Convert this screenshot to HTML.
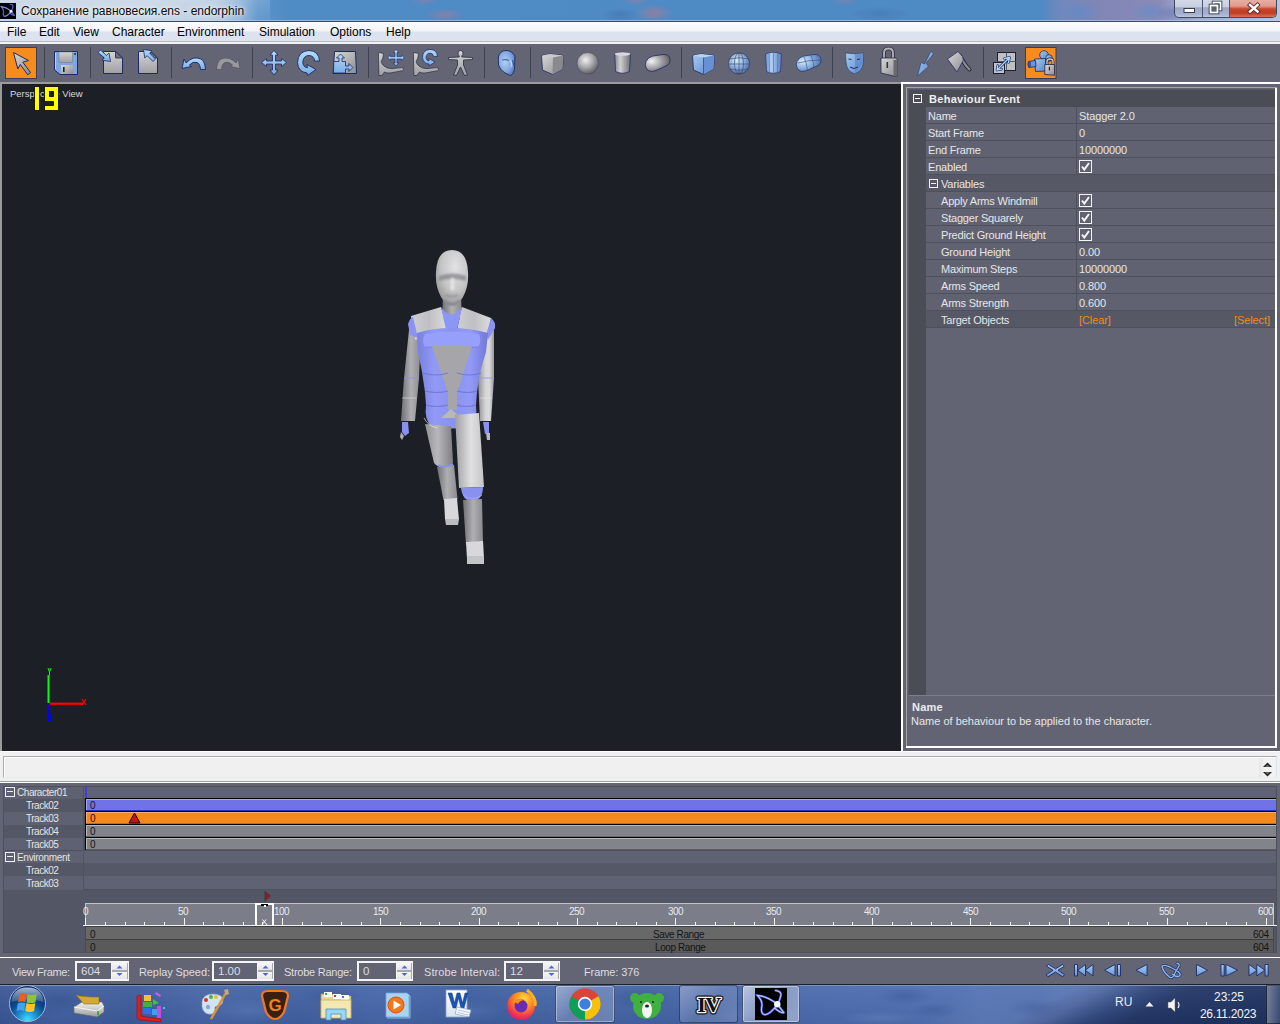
<!DOCTYPE html>
<html><head><meta charset="utf-8">
<style>
*{box-sizing:border-box;margin:0;padding:0}
html,body{width:1280px;height:1024px;overflow:hidden;background:#636575;font-family:"Liberation Sans",sans-serif;position:relative}
.a{position:absolute}
.t{position:absolute;white-space:pre;line-height:1}
svg{position:absolute;overflow:visible}
</style></head><body>
<!-- title -->
<div class="a" style="left:0px;top:0px;width:1280px;height:21px;background:linear-gradient(90deg,#c4d2e4 0px,#c6d4e6 150px,#b8cce2 215px,#90b2d8 240px,#5c94ca 258px,#4f8bc5 290px,#4e8ac4 1040px,#7088bc 1060px,#8086b6 1100px,#8a8ab8 1160px,#9aa6d0 1180px,#b4c4e2 1280px);"></div>
<div class="a" style="left:425px;top:8px;width:40px;height:14px;background:radial-gradient(closest-side,rgba(190,120,140,0.45),rgba(190,120,140,0));"></div>
<div class="a" style="left:635px;top:4px;width:38px;height:18px;background:radial-gradient(closest-side,rgba(200,120,130,0.5),rgba(200,120,130,0));"></div>
<div class="a" style="left:410px;top:-6px;width:30px;height:12px;background:radial-gradient(closest-side,rgba(200,120,140,0.35),rgba(200,120,140,0));"></div>
<div class="a" style="left:620px;top:-6px;width:30px;height:12px;background:radial-gradient(closest-side,rgba(200,120,140,0.35),rgba(200,120,140,0));"></div>
<div class="a" style="left:830px;top:-6px;width:30px;height:12px;background:radial-gradient(closest-side,rgba(200,120,140,0.3),rgba(200,120,140,0));"></div>
<div class="a" style="left:600px;top:8px;width:40px;height:14px;background:radial-gradient(closest-side,rgba(50,80,140,0.25),rgba(50,80,140,0));"></div>
<div class="a" style="left:850px;top:6px;width:60px;height:16px;background:radial-gradient(closest-side,rgba(50,80,140,0.2),rgba(50,80,140,0));"></div>
<div class="a" style="left:1155px;top:4px;width:50px;height:18px;background:radial-gradient(closest-side,rgba(50,80,150,0.35),rgba(50,80,150,0));"></div>
<div class="a" style="left:1060px;top:2px;width:40px;height:20px;background:radial-gradient(closest-side,rgba(80,140,210,0.45),rgba(80,140,210,0));"></div>
<div class="a" style="left:1130px;top:2px;width:40px;height:20px;background:radial-gradient(closest-side,rgba(80,140,210,0.45),rgba(80,140,210,0));"></div>
<div class="a" style="left:0px;top:20px;width:1280px;height:1px;background:rgba(190,210,240,0.6);"></div>
<div class="a" style="left:0px;top:0px;width:270px;height:21px;background:linear-gradient(180deg,rgba(255,255,255,0.15),rgba(255,255,255,0.05));"></div>
<div class="a" style="left:0px;top:21px;width:1280px;height:1px;background:#3d4b5e;"></div>
<svg style="left:0;top:3px" width="16" height="16" viewBox="0 0 32 32"><rect width="32" height="32" fill="#000"/>
<g fill="none" stroke="#5868c8" stroke-width="2.4" stroke-linecap="round"><path d="M22.5 16.3 Q12 8 2.4 7.4 Q7 12 7 17 Q5 27 10.5 26.7 Q16 25.5 22.5 16.3 M22.5 16.3 Q25 12 26 7 Q26 3 20.5 2.5 M22.5 16.3 Q26 21 28.8 24.5 Q27 26 19.5 20"/></g>
<g fill="none" stroke="#a0b0f0" stroke-width="1.2" stroke-linecap="round"><path d="M22.5 16.3 Q12 8 2.4 7.4 M22.5 16.3 Q16 25.5 10.5 26.7"/></g>
<circle cx="22" cy="16.3" r="3" fill="#e8eef8"/></svg><div class="t" style="left:21px;top:4.84px;font-size:12px;color:#0a0a0a;font-weight:400;text-shadow:0 0 6px rgba(255,255,255,0.9),0 0 3px rgba(255,255,255,0.8)">Сохранение равновесия.ens - endorphin</div>
<div class="a" style="left:1174px;top:-2px;width:103px;height:20px;border:1px solid #3c4a60;border-top:none;border-radius:0 0 5px 5px;overflow:hidden;background:linear-gradient(#d6dce8 0,#c8d0e0 45%,#9ea8c6 52%,#a8b2d0 85%,#bcc6e0 100%)">
<div class="a" style="left:27px;top:0;width:1px;height:20px;background:#4b5670"></div>
<div class="a" style="left:54px;top:0;width:1px;height:20px;background:#4b5670"></div>
<div class="a" style="left:55px;top:0;width:47px;height:20px;background:linear-gradient(#eab4aa 0,#e09c8c 40%,#c8442a 55%,#c23c22 75%,#d8806c 100%)"></div>
</div><svg style="left:1174px;top:0" width="103" height="18" viewBox="1174 0 103 18">
<rect x="1184" y="8.5" width="10.5" height="4" fill="#fff" stroke="#363e52" stroke-width="1"/>
<rect x="1213.5" y="2.5" width="7" height="7" fill="none" stroke="#363e52" stroke-width="3.6"/>
<rect x="1213.5" y="2.5" width="7" height="7" fill="none" stroke="#fff" stroke-width="1.8"/>
<rect x="1210.5" y="5.5" width="7" height="7" fill="#8890a8" stroke="#363e52" stroke-width="3.6"/>
<rect x="1210.5" y="5.5" width="7" height="7" fill="#5a6278" stroke="#fff" stroke-width="1.8"/>
<path d="M1250 5 L1257.5 11.5 M1257.5 5 L1250 11.5" stroke="#4a3030" stroke-width="4.2" stroke-linecap="square"/>
<path d="M1250 5 L1257.5 11.5 M1257.5 5 L1250 11.5" stroke="#fff" stroke-width="2.4" stroke-linecap="square"/>
</svg><!-- menu -->
<div class="a" style="left:0px;top:22px;width:1280px;height:19px;background:linear-gradient(#fcfcfe 0,#f3f4f9 45%,#dde2ef 55%,#dde2ef 100%);"></div>
<div class="a" style="left:0px;top:41px;width:1280px;height:1px;background:#b8bac2;"></div>
<div class="a" style="left:0px;top:42px;width:1280px;height:2px;background:#f2f2f2;"></div>
<div class="t" style="left:7px;top:25.84px;font-size:12px;color:#000;font-weight:400;">File</div>
<div class="t" style="left:39px;top:25.84px;font-size:12px;color:#000;font-weight:400;">Edit</div>
<div class="t" style="left:73px;top:25.84px;font-size:12px;color:#000;font-weight:400;">View</div>
<div class="t" style="left:112px;top:25.84px;font-size:12px;color:#000;font-weight:400;">Character</div>
<div class="t" style="left:177px;top:25.84px;font-size:12px;color:#000;font-weight:400;">Environment</div>
<div class="t" style="left:259px;top:25.84px;font-size:12px;color:#000;font-weight:400;">Simulation</div>
<div class="t" style="left:330px;top:25.84px;font-size:12px;color:#000;font-weight:400;">Options</div>
<div class="t" style="left:386px;top:25.84px;font-size:12px;color:#000;font-weight:400;">Help</div>
<!-- toolbar -->
<div class="a" style="left:0px;top:44px;width:1280px;height:38px;background:#636575;"></div>
<svg style="left:0;top:44px" width="1280" height="38" viewBox="0 44 1280 38">
<defs>
<linearGradient id="gb" x1="0" y1="0" x2="0" y2="1"><stop offset="0" stop-color="#b4dcf8"/><stop offset="1" stop-color="#78ace4"/></linearGradient>
<linearGradient id="gbd" x1="0" y1="0" x2="1" y2="1"><stop offset="0" stop-color="#a8ccf0"/><stop offset="1" stop-color="#5a86cc"/></linearGradient>
<linearGradient id="gg" x1="0" y1="0" x2="1" y2="1"><stop offset="0" stop-color="#d8d8da"/><stop offset="1" stop-color="#8e8e92"/></linearGradient>
<linearGradient id="ggv" x1="0" y1="0" x2="0" y2="1"><stop offset="0" stop-color="#d4d4d6"/><stop offset="1" stop-color="#a0a0a4"/></linearGradient>
<linearGradient id="ggh" x1="0" y1="0" x2="1" y2="0"><stop offset="0" stop-color="#8a8a8e"/><stop offset="0.35" stop-color="#d0d0d2"/><stop offset="1" stop-color="#6e6e72"/></linearGradient>
<linearGradient id="gbh" x1="0" y1="0" x2="1" y2="0"><stop offset="0" stop-color="#6a90d0"/><stop offset="0.35" stop-color="#b0d0f4"/><stop offset="1" stop-color="#5a7ec0"/></linearGradient>
<radialGradient id="gsph" cx="0.4" cy="0.35" r="0.7"><stop offset="0" stop-color="#f0f0f2"/><stop offset="0.5" stop-color="#a8a8ac"/><stop offset="1" stop-color="#56565a"/></radialGradient>
<radialGradient id="gbsph" cx="0.4" cy="0.35" r="0.7"><stop offset="0" stop-color="#d8ecfa"/><stop offset="0.5" stop-color="#88b0e0"/><stop offset="1" stop-color="#4a6aa8"/></radialGradient>
<radialGradient id="gcap" cx="0.25" cy="0.4" r="0.8"><stop offset="0" stop-color="#f4f4f6"/><stop offset="0.5" stop-color="#a4a4a8"/><stop offset="1" stop-color="#5a5a5e"/></radialGradient>
<radialGradient id="gbcap" cx="0.25" cy="0.4" r="0.8"><stop offset="0" stop-color="#d8ecfa"/><stop offset="0.5" stop-color="#8ab0e0"/><stop offset="1" stop-color="#4a6aa8"/></radialGradient>
<radialGradient id="ghead" cx="0.4" cy="0.45" r="0.7"><stop offset="0" stop-color="#b4d2f2"/><stop offset="0.6" stop-color="#80a4e0"/><stop offset="1" stop-color="#4e6cb4"/></radialGradient>
</defs>
<g fill="#3e4152">
<rect x="44" y="47" width="1" height="31"/><rect x="90" y="47" width="1" height="31"/><rect x="171" y="47" width="1" height="31"/>
<rect x="252" y="47" width="1" height="31"/><rect x="368" y="47" width="1" height="31"/><rect x="484" y="47" width="1" height="31"/>
<rect x="530" y="47" width="1" height="31"/><rect x="681" y="47" width="1" height="31"/><rect x="832" y="47" width="1" height="31"/>
<rect x="983" y="47" width="1" height="31"/>
</g>
<!-- select button -->
<rect x="5.5" y="47.5" width="31" height="31" fill="#f78b1c" stroke="#3a3e56" stroke-width="1"/>
<path d="M13.5 52.5 L28.5 60.5 L22.8 62.2 L30.5 72.5 L27.8 74.8 L20.3 64.5 L17.8 69 Z" fill="url(#gg)" stroke="#202a5a" stroke-width="1" stroke-linejoin="round"/>
<!-- floppy -->
<path d="M54.5 51.5 L77.5 51.5 L77.5 74.5 L60 74.5 L54.5 70 Z" fill="#7ea6e2" stroke="#1c2868" stroke-width="1"/>
<rect x="59" y="52" width="13.5" height="10.5" fill="url(#ggv)" stroke="#6e7890" stroke-width="0.5"/>
<rect x="61" y="65" width="12" height="9" fill="url(#gg)"/>
<rect x="63" y="67" width="1.6" height="5" fill="#222"/>
<circle cx="75" cy="54" r="0.9" fill="#222"/>
<path d="M55.5 53 L55.5 69" stroke="#b8d4f4" stroke-width="1"/>
<!-- import doc -->
<path d="M103.5 51.5 L115.5 51.5 L122.5 58 L122.5 73.5 L103.5 73.5 Z" fill="url(#ggv)" stroke="#1c2868" stroke-width="1"/>
<path d="M115.5 51.5 L115.5 58 L122.5 58 Z" fill="#707074" stroke="#1c2868" stroke-width="0.8"/>
<path d="M98 52.5 L100.5 50 L106.5 55.5 L109 53 L110.5 61.5 L102 60.2 L104.3 57.8 Z" fill="url(#gb)" stroke="#1c2868" stroke-width="0.8" stroke-linejoin="round"/>
<!-- export doc -->
<path d="M138.5 51.5 L150.5 51.5 L157.5 58 L157.5 73.5 L138.5 73.5 Z" fill="url(#ggv)" stroke="#1c2868" stroke-width="1"/>
<path d="M150.5 51.5 L150.5 58 L157.5 58 Z" fill="#707074" stroke="#1c2868" stroke-width="0.8"/>
<path d="M143.5 49.5 L152 50.8 L149.7 53.2 L155.5 59 L153 61.5 L147.2 55.7 L144.8 58 Z" fill="url(#gb)" stroke="#1c2868" stroke-width="0.8" stroke-linejoin="round"/>
<!-- undo -->
<path d="M186 63 Q193 55.5 201 59 Q205 61.5 205.5 69.5 L200.5 69.5 Q200 63.5 197 62.5 Q193 61 189.5 65 L191.5 66.5 L182 68.5 L184 59 Z" fill="url(#gb)" stroke="#1c2868" stroke-width="0.9" stroke-linejoin="round"/>
<!-- redo (gray) -->
<path d="M236 63 Q229 55.5 221 59 Q217 61.5 216.5 69.5 L221.5 69.5 Q222 63.5 225 62.5 Q229 61 232.5 65 L230.5 66.5 L240 68.5 L238 59 Z" fill="#9a9a9e" stroke="#505260" stroke-width="0.7" stroke-linejoin="round"/>
<!-- move -->
<path d="M274 50.5 L278 55 L275.5 55 L275.5 61 L281.5 61 L281.5 58.5 L286.5 62.5 L281.5 66.5 L281.5 64 L275.5 64 L275.5 70 L278 70 L274 75 L270 70 L272.5 70 L272.5 64 L266.5 64 L266.5 66.5 L261.5 62.5 L266.5 58.5 L266.5 61 L272.5 61 L272.5 55 L270 55 Z" fill="url(#gb)" stroke="#1c2868" stroke-width="0.8" stroke-linejoin="round"/>
<!-- rotate -->
<path d="M319.5 61 Q319 51 309 50.5 Q298 51 297.5 62.5 Q298 72 307 73 L307.5 75.5 L316 69.5 L307 64.5 L307.3 67.8 Q303 67 302.8 62 Q303.5 55.5 309 55.5 Q314.5 56 314.5 61 Z" fill="url(#gb)" stroke="#1c2868" stroke-width="0.9" stroke-linejoin="round"/>
<!-- scale -->
<path d="M334.5 51.5 L355.5 51.5 L356.5 73.5 L333 73.5 Z" fill="url(#gg)" stroke="#1c2868" stroke-width="1"/>
<path d="M333.8 61.5 L339 61.5 L339 58 L336.5 58 L340.5 54 L344.5 58 L342 58 L342 61.5 L345.5 61.5 L345.5 66 L349 66 L349 63.5 L353 67.5 L349 71.5 L349 69 L345.5 69 L345.5 73 L333.5 73 Z" fill="url(#gb)" stroke="#1c2868" stroke-width="0.8" stroke-linejoin="round"/>
<!-- char move -->
<path d="M378.5 52.5 L383.5 53.5 L382.8 58 L381.2 61.5 Q381.5 64 384 66 Q387.5 68.8 392 68.6 L401.5 67.6 Q403.8 67.8 403.6 69.8 Q403.2 71 400 71.2 L390 73 Q386.5 73.4 384.5 72 L381.8 75.5 L378.8 75.5 Z" fill="url(#ggv)" stroke="#2a2c40" stroke-width="0.7" stroke-linejoin="round"/>
<path d="M396 49.5 L398.8 52.5 L397 52.5 L397 56.5 L401.5 56.5 L401.5 55 L404.5 57.8 L401.5 60.5 L401.5 59 L397 59 L397 63 L398.8 63 L396 66 L393.2 63 L395 63 L395 59 L390.5 59 L390.5 60.5 L387.5 57.8 L390.5 55 L390.5 56.5 L395 56.5 L395 52.5 L393.2 52.5 Z" fill="url(#gb)" stroke="#1c2868" stroke-width="0.6" stroke-linejoin="round"/>
<!-- char rotate -->
<path d="M413.5 52.5 L418.5 53.5 L417.8 58 L416.2 61.5 Q416.5 64 419 66 Q422.5 68.8 427 68.6 L436.5 67.6 Q438.8 67.8 438.6 69.8 Q438.2 71 435 71.2 L425 73 Q421.5 73.4 419.5 72 L416.8 75.5 L413.8 75.5 Z" fill="url(#ggv)" stroke="#2a2c40" stroke-width="0.7" stroke-linejoin="round"/>
<path d="M437.5 56.5 Q437 49.5 430 49.5 Q422.5 50 422.5 57.5 Q423 63.5 429 64 L429 66 L435 62 L429 58.5 L429 61 Q426 60.5 426 57.5 Q426.5 53 430 53 Q433.5 53.5 433.5 56.5 Z" fill="url(#gb)" stroke="#1c2868" stroke-width="0.7" stroke-linejoin="round"/>
<!-- figure -->
<path d="M460.5 50.5 Q463 50.5 463 53 Q463 55 461.8 55.8 L461.8 57 L472.5 57.5 L472.5 59.5 L463.5 60 L463.5 65 L467.5 75 L464.5 75.5 L460.5 67 L456.5 75.5 L453.5 75 L457.5 65 L457.5 60 L448.5 59.5 L448.5 57.5 L459.2 57 L459.2 55.8 Q458 55 458 53 Q458 50.5 460.5 50.5 Z" fill="url(#ggv)" stroke="#2a2c40" stroke-width="0.8" stroke-linejoin="round"/>
<!-- head -->
<path d="M506 50.5 Q500 50.5 498.3 57 L498.5 65 Q500 70 505 73 L510.5 75.5 Q514 74 514.5 68 L515 56 Q512 50.5 506 50.5 Z" fill="url(#ghead)" stroke="#1c2a60" stroke-width="0.9"/>
<path d="M502 60 Q506 59 509 60.5" stroke="#4a68b0" stroke-width="1.2" fill="none"/>
<path d="M510.5 60 L512 65.5 L510.5 66.5" stroke="#c8e4fa" stroke-width="1" fill="none"/>
<path d="M512.5 60 L514 66" stroke="#3a58a0" stroke-width="1.2" fill="none"/>
<!-- gray cube -->
<path d="M541.5 55.5 L550 54 L563.5 55.5 L562.5 69 L552.5 74.5 L542.5 70 Z" fill="url(#gg)" stroke="#1c2868" stroke-width="0.8"/>
<path d="M541.5 55.5 L553 57.5 L563.5 55.5 L550 54 Z" fill="#cacace"/>
<path d="M553 57.5 L552.5 74.5 L562.5 69 L563.5 55.5 Z" fill="#8a8a8e"/>
<!-- sphere -->
<circle cx="587.8" cy="63.3" r="10.8" fill="url(#gsph)" stroke="#4a4a55" stroke-width="0.6"/>
<!-- cylinder -->
<path d="M614.8 54 Q622.5 50.5 630.5 54 L629.5 71.5 Q622.5 75 615.5 71.5 Z" fill="url(#ggh)" stroke="#1c2868" stroke-width="0.7"/>
<ellipse cx="622.6" cy="54" rx="7.8" ry="1.8" fill="#d8d8da"/>
<!-- capsule -->
<path d="M649 71 Q644 68 646 61.5 Q648 57 653 56 L663 54.5 Q669 54 670 59 Q670.5 64 666 66 L656 70.5 Q652 72 649 71 Z" fill="url(#gcap)" stroke="#1c2868" stroke-width="0.8"/>
<!-- blue cube -->
<path d="M692.5 55.5 L701 54 L714.5 55.5 L713.5 69 L703.5 74.5 L693.5 70 Z" fill="url(#gbd)" stroke="#1c2868" stroke-width="0.8"/>
<path d="M692.5 55.5 L703.5 57.5 L714.5 55.5 L701 54 Z" fill="#b8d4f2"/>
<path d="M703.5 57.5 L703.5 74.5 L713.5 69 L714.5 55.5 Z" fill="#6a90d4"/>
<path d="M703.5 57.5 L703.5 74.5" stroke="#3a4a7a" stroke-width="0.8"/>
<!-- globe -->
<circle cx="739" cy="63.5" r="10.6" fill="url(#gbsph)" stroke="#3a3a48" stroke-width="0.7"/>
<g stroke="#3a4060" stroke-width="0.6" fill="none"><ellipse cx="739" cy="63.5" rx="4.5" ry="10.6"/><path d="M739 53 L739 74 M729 59 Q739 56.5 749 59 M728.5 64 L749.5 64 M729.5 69 Q739 71.5 748.5 69"/></g>
<!-- blue cylinder -->
<path d="M765.5 54 Q773 50.5 781.5 54 L780.5 71.5 Q773 75 766.5 71.5 Z" fill="url(#gbh)" stroke="#2a3a70" stroke-width="0.7"/>
<g stroke="#4a6aa8" stroke-width="0.6"><path d="M769 53 L769.5 72.5 M773.5 52.5 L773.5 73.5 M778 53 L777.5 72.5"/></g>
<!-- blue capsule -->
<path d="M800 71 Q795 68 797 61.5 Q799 57 804 56 L814 54.5 Q820 54 821 59 Q821.5 64 817 66 L807 70.5 Q803 72 800 71 Z" fill="url(#gbcap)" stroke="#2a3a70" stroke-width="0.8"/>
<g stroke="#3a4a78" stroke-width="0.6" fill="none"><path d="M804 56.5 Q806.5 63 807.5 70 M811 55.3 Q813.5 61 814 68 M798 63 Q808 60 820 60"/></g>
<!-- mask -->
<path d="M845.5 53 Q855 54.5 863.5 53 L863.5 62 Q863 71 854.5 74 Q846.5 71 846 62 Z" fill="url(#gbd)" stroke="#2a3a70" stroke-width="0.6"/>
<path d="M855 54 L855 74 L863 62 L863.5 53Z" fill="#5a80c4" opacity="0.6"/>
<path d="M848.5 59 L851.5 59.5 M857 59.5 L860 59 M850 67 Q854 70 858 67" stroke="#203060" stroke-width="1" fill="none"/>
<!-- lock -->
<path d="M884 58 L884 53 Q884 48.5 888.5 48.5 Q893 48.5 893 53 L893 58" stroke="#2a2c40" stroke-width="3.4" fill="none"/>
<path d="M884 58 L884 53 Q884 48.5 888.5 48.5 Q893 48.5 893 53 L893 58" stroke="#b4b4b8" stroke-width="1.8" fill="none"/>
<path d="M881 58 L896 58 L897.5 60 L897.5 76 L893.5 76 L881 73 Z" fill="url(#gg)" stroke="#2a2c40" stroke-width="0.8"/>
<path d="M893.5 60 L897.5 60 L897.5 76 L893.5 76Z" fill="#6a6a6e"/>
<rect x="886.5" y="62" width="1.6" height="6" fill="#333"/>
<!-- pen -->
<path d="M932.5 52 Q934 53.5 932 56 L926 63 L928.5 66.5 L917.5 76 L921 62.5 L924.5 64 L930 53 Q931 51 932.5 52 Z" fill="url(#gbd)" stroke="#2a3a70" stroke-width="0.6" stroke-linejoin="round"/>
<!-- axe -->
<path d="M960 56 L965.5 65 L969.5 69.5" stroke="#1c2240" stroke-width="4" stroke-linecap="round" fill="none"/>
<path d="M960 56 L965.5 65 L969.5 69.5" stroke="#8c8c90" stroke-width="2.3" stroke-linecap="round" fill="none"/>
<path d="M947.5 59 L958 51.5 L962.5 56.5 L963.5 60 L957 72 Z" fill="url(#gg)" stroke="#2a2c6a" stroke-width="0.8" stroke-linejoin="round"/>
<!-- resize grid -->
<rect x="997.5" y="52.5" width="18" height="18" fill="#c0c0c2" stroke="#1a1e38" stroke-width="1"/>
<path d="M1006.5 52.5 L1006.5 70.5 M997.5 61.5 L1015.5 61.5" stroke="#5a5c68" stroke-width="1"/>
<rect x="993.5" y="62.5" width="11" height="11" fill="#c4c4c6" stroke="#1a1e38" stroke-width="1"/>
<path d="M997 70 L1009.5 57.5 M1009.5 57.5 L1004.5 58.5 M1009.5 57.5 L1008.5 62.5 M997 70 L997.8 65.5 M997 70 L1001.5 69.2" stroke="#1c2868" stroke-width="2.6" stroke-linecap="round"/>
<path d="M997 70 L1009.5 57.5 M1009.5 57.5 L1004.5 58.5 M1009.5 57.5 L1008.5 62.5 M997 70 L997.8 65.5 M997 70 L1001.5 69.2" stroke="#a8d8f8" stroke-width="1.3" stroke-linecap="round"/>
<!-- camera lock button -->
<rect x="1025.5" y="47.5" width="30.5" height="31" fill="#f78b1c" stroke="#3a3e56" stroke-width="1"/>
<circle cx="1044" cy="55" r="4.3" fill="url(#gbd)" stroke="#1c2868" stroke-width="0.8"/>
<circle cx="1049" cy="58" r="3.3" fill="url(#gbd)" stroke="#1c2868" stroke-width="0.8"/>
<path d="M1034.5 59 L1045.5 58.5 L1046 71 L1035.5 71.5 Z" fill="url(#gbd)" stroke="#1c2868" stroke-width="0.8"/>
<path d="M1028.5 61.5 L1035.5 60.5 L1036 66.5 L1029 67.5 Q1027.5 64.5 1028.5 61.5 Z" fill="#6a98e0" stroke="#1c2868" stroke-width="0.8"/>
<ellipse cx="1029.3" cy="64.5" rx="1.2" ry="3" fill="#3a60b0" stroke="#1c2868" stroke-width="0.6"/>
<path d="M1047 65 L1047 61.5 Q1047 59 1050 59 Q1053 59 1053 61.5 L1053 65" stroke="#1c2240" stroke-width="2.8" fill="none"/>
<path d="M1047 65 L1047 61.5 Q1047 59 1050 59 Q1053 59 1053 61.5 L1053 65" stroke="#c8c8ca" stroke-width="1.4" fill="none"/>
<path d="M1044.8 64.5 L1054.5 64.5 L1054.5 75.2 L1044.8 74.5 Z" fill="url(#gg)" stroke="#1c2240" stroke-width="0.8"/>
<rect x="1048.8" y="66.8" width="1.2" height="3.6" fill="#222"/>
</svg>
<!-- viewport -->
<div class="a" style="left:0px;top:82px;width:901px;height:2px;background:#9b9b99;"></div>
<div class="a" style="left:0px;top:82px;width:2px;height:669px;background:#9b9b99;"></div>
<div class="a" style="left:2px;top:84px;width:899px;height:667px;background:#1d1f27;"></div>
<div class="t" style="left:10px;top:88.96px;font-size:9.5px;color:#d8d8d8;font-weight:400;">Perspective View</div>
<svg style="left:34px;top:86px" width="26" height="26" viewBox="0 0 26 26"><g fill="#ffff00" stroke="#000" stroke-width="0.8"><rect x="0.5" y="0.5" width="5" height="24"/><path d="M10.5 0.5 L24.5 0.5 L24.5 24.5 L10.5 24.5 L10.5 19.5 L19.5 19.5 L19.5 15.5 L10.5 15.5 Z"/></g><rect x="15.5" y="5.5" width="4" height="5" fill="#1d1f27" stroke="#000" stroke-width="0.8"/></svg>
<svg style="left:40px;top:665px" width="60" height="60" viewBox="40 665 60 60">
<rect x="47.5" y="675" width="2" height="28" fill="#00ff00"/>
<path d="M48 668 L49.5 672 L51 668 M49.5 672 L49.5 675" stroke="#00ff00" stroke-width="1" fill="none"/>
<rect x="49.5" y="702.6" width="34" height="2.2" fill="#ff0000"/>
<path d="M82 699 L86 705 M86 699 L82 705" stroke="#ff0000" stroke-width="1.2"/>
<rect x="47.5" y="703" width="2" height="18" fill="#0000ff"/>
<path d="M49 714 L51.5 714 L49.5 719 L52 719" stroke="#0000ff" stroke-width="1" fill="none"/>
<rect x="47.5" y="719" width="4" height="2" fill="#0000ff"/>
</svg><svg style="left:380px;top:240px" width="140" height="340" viewBox="380 240 140 340">
<defs>
<linearGradient id="fgh" x1="0" y1="0" x2="1" y2="0"><stop offset="0" stop-color="#8e8e92"/><stop offset="0.45" stop-color="#d4d4d6"/><stop offset="0.7" stop-color="#dcdcde"/><stop offset="1" stop-color="#9a9a9e"/></linearGradient>
<linearGradient id="fgl" x1="0" y1="0" x2="1" y2="0"><stop offset="0" stop-color="#707074"/><stop offset="0.5" stop-color="#b0b0b4"/><stop offset="1" stop-color="#8a8a8e"/></linearGradient>
<linearGradient id="fgl2" x1="0" y1="0" x2="1" y2="0"><stop offset="0" stop-color="#909094"/><stop offset="0.45" stop-color="#b8b8bc"/><stop offset="1" stop-color="#7e7e82"/></linearGradient><linearGradient id="fgr" x1="0" y1="0" x2="1" y2="0"><stop offset="0" stop-color="#a0a0a4"/><stop offset="0.55" stop-color="#e0e0e2"/><stop offset="1" stop-color="#c4c4c6"/></linearGradient>
<radialGradient id="fhead" cx="0.6" cy="0.3" r="0.8"><stop offset="0" stop-color="#e2e2e4"/><stop offset="0.55" stop-color="#c4c4c6"/><stop offset="1" stop-color="#8a8a8e"/></radialGradient>
<linearGradient id="fsh" x1="0" y1="0" x2="1" y2="0"><stop offset="0" stop-color="#cfcfd2"/><stop offset="0.5" stop-color="#c0c0c4"/><stop offset="1" stop-color="#dcdcde"/></linearGradient>
<filter id="fblur" x="-20%" y="-20%" width="140%" height="140%"><feGaussianBlur stdDeviation="0.8"/></filter><linearGradient id="fbl" x1="0" y1="0" x2="0" y2="1"><stop offset="0" stop-color="#9aa2f8"/><stop offset="1" stop-color="#7880e0"/></linearGradient><linearGradient id="fbh" x1="0" y1="0" x2="1" y2="0"><stop offset="0" stop-color="#7880e0"/><stop offset="0.25" stop-color="#929af6"/><stop offset="0.5" stop-color="#8a92f0"/><stop offset="0.75" stop-color="#929af6"/><stop offset="1" stop-color="#7078d8"/></linearGradient>
</defs>
<!-- arms -->
<path d="M409 330 L421 330 L419 378 L415 421 L401 421 L404 378 Z" fill="url(#fgl)"/>
<path d="M404 378 L419 378" stroke="#8a94f0" stroke-width="0.8"/>
<path d="M402 398 L416 398" stroke="#e0e0e0" stroke-width="0.6"/>
<path d="M402 422 L408 422 L409 433 L405 436 L402 432 Z" fill="#8890f0"/>
<path d="M401 432 L404 436 L402 440 L400 437Z" fill="#b0b0b4"/>
<path d="M478 330 L494 330 L494 378 L491 421 L480 421 L478 378 Z" fill="url(#fgh)"/>
<path d="M479 378 L493 378" stroke="#8a94f0" stroke-width="0.8"/>
<path d="M480 398 L492 398" stroke="#e8e8e8" stroke-width="0.6"/>
<path d="M483 422 L489 422 L489 433 L485 434 Z" fill="#8890f0"/>
<path d="M486 433 L490 433 L490 440 L487 440Z" fill="#b8b8bc"/>
<!-- neck -->
<path d="M443 298 L461 298 L462 318 L442 318 Z" fill="url(#fgl)"/>
<!-- head -->
<path d="M452 250 Q467 250 468 272 Q469 286 463 297 Q458 306 452 306 Q446 306 441 297 Q435 286 436 272 Q437 250 452 250 Z" fill="url(#fhead)"/>
<g filter="url(#fblur)">
<path d="M439 276 Q452 271 466 276 L466 281 Q452 277 439 281 Z" fill="#8a8a8e" opacity="0.8"/>
<path d="M451 278 L454 278 L454.5 290 L450.5 290 Z" fill="#e4e4e6"/>
<path d="M446 295 Q452 298 458 295" stroke="#909094" stroke-width="1.5" fill="none"/>
<path d="M443 300 Q452 308 461 300" stroke="#7a7a7e" stroke-width="1.5" fill="none"/>
</g>
<!-- shoulders gray -->
<path d="M411 316 L441 307 L447 330 L415 340 Z" fill="url(#fsh)"/>
<path d="M462 307 L491 318 L487 340 L457 330 Z" fill="url(#fsh)"/>
<path d="M408 324 Q410 318 413 317 L418 338 L410 335 Z" fill="#8a94f0"/>
<path d="M491 318 Q496 322 495 328 L488 340 L486 335 Z" fill="#8a94f0"/>
<!-- collar blue -->
<path d="M441 307 Q451 322 462 307 L457 330 Q451 334 446 330 Z" fill="#8c96f4"/>
<!-- torso blue -->
<path d="M417 333 Q450 323 488 333 L486 352 L480 372 L477 392 L476 405 Q478 420 470 427 Q451 430 432 427 Q424 420 426 405 L425 392 L422 372 L418 352 Z" fill="url(#fbh)"/>
<path d="M425 334 Q451 329 479 334 Q482 341 478 347 Q451 351 425 347 Q421 341 425 334 Z" fill="#96a0fa"/>
<path d="M426 347 Q451 350 478 347" stroke="#7078d8" stroke-width="1" fill="none" opacity="0.7"/>
<!-- gray chest triangle -->
<path d="M432 346 L472 346 L457 393 L457 410 L448 410 L448 393 Z" fill="#a6a6aa"/>
<path d="M441 418 L451 409 L461 418 Z" fill="#b8b8bc"/>
<path d="M423 373 Q436 377 448 373 M457 373 Q469 377 481 373 M425 391 Q437 394 448 391 M457 391 Q468 394 477 391 M426 405 Q437 408 448 405 M457 405 Q467 408 476 405" stroke="#6870cc" stroke-width="1.2" fill="none" opacity="0.75"/>
<!-- left leg (screen) -->
<path d="M425 424 L451 426 L453 462 Q452 468 445 468 Q438 468 434 463 Z" fill="url(#fgl2)"/>
<path d="M437 467 L454 465 L457.5 499 Q452 503 443.5 500 Z" fill="url(#fgl)"/>
<path d="M438 465 Q445 469 453 464" stroke="#8890f0" stroke-width="1.6" fill="none"/>
<path d="M444 499 L457 498 L459 520 L449 522 L445 519 Z" fill="#d8d8dc"/>
<path d="M445 519 L459 519 L458 525 L446 525Z" fill="#bcbcc0"/>
<!-- right leg (screen) -->
<path d="M455 415 L479 413 L484 487 L459 488 Z" fill="url(#fgr)"/>
<path d="M461 488 L483 487 Q483 500 472 502 Q462 500 461 488 Z" fill="#8890f0"/>
<path d="M463 495 Q472 502 482 495" stroke="#a8aef8" stroke-width="0.8" fill="none"/>
<path d="M463 500 L482 499 L483 544 Q474 548 466 545 Z" fill="url(#fgl)"/>
<path d="M466 542 L483 541 L484 558 L467 559 Z" fill="#d8d8dc"/>
<path d="M467 556 L484 556 L484 564 L467 564Z" fill="#c4c4c8"/>
<path d="M424 418 Q428 426 437 428" stroke="#e8e8e8" stroke-width="0.7" fill="none"/>
</svg><!-- props -->
<div class="a" style="left:901px;top:82px;width:379px;height:670px;background:#626474;"></div>
<div class="a" style="left:901px;top:82px;width:2px;height:670px;background:#ffffff;"></div>
<div class="a" style="left:901px;top:82px;width:379px;height:2px;background:#ffffff;"></div>
<div class="a" style="left:906px;top:87px;width:371px;height:1px;background:#a4a4a2;"></div>
<div class="a" style="left:906px;top:87px;width:1px;height:661px;background:#a4a4a2;"></div>
<div class="a" style="left:1275px;top:88px;width:2px;height:660px;background:#ffffff;"></div>
<div class="a" style="left:906px;top:746px;width:371px;height:2px;background:#ffffff;"></div>
<div class="a" style="left:908px;top:89px;width:367px;height:1px;background:#585a68;"></div>
<div class="a" style="left:908px;top:89px;width:1px;height:606px;background:#585a68;"></div>
<div class="a" style="left:909px;top:90px;width:366px;height:17px;background:#4b4d56;"></div>
<div class="a" style="left:909px;top:107px;width:17px;height:588px;background:#4b4d56;"></div>
<div class="a" style="left:926px;top:107px;width:349px;height:16px;background:#606272;"></div>
<div class="a" style="left:1076px;top:107px;width:1px;height:16px;background:#4e505a;"></div>
<div class="a" style="left:926px;top:123px;width:349px;height:1px;background:#4e505a;"></div>
<div class="t" style="left:928px;top:110.69px;font-size:11px;color:#e6e6e6;font-weight:400;letter-spacing:-0.2px;">Name</div>
<div class="t" style="left:1079px;top:110.69px;font-size:11px;color:#e6e6e6;font-weight:400;letter-spacing:-0.1px;">Stagger 2.0</div>
<div class="a" style="left:926px;top:124px;width:349px;height:16px;background:#606272;"></div>
<div class="a" style="left:1076px;top:124px;width:1px;height:16px;background:#4e505a;"></div>
<div class="a" style="left:926px;top:140px;width:349px;height:1px;background:#4e505a;"></div>
<div class="t" style="left:928px;top:127.69px;font-size:11px;color:#e6e6e6;font-weight:400;letter-spacing:-0.2px;">Start Frame</div>
<div class="t" style="left:1079px;top:127.69px;font-size:11px;color:#e6e6e6;font-weight:400;letter-spacing:-0.1px;">0</div>
<div class="a" style="left:926px;top:141px;width:349px;height:16px;background:#606272;"></div>
<div class="a" style="left:1076px;top:141px;width:1px;height:16px;background:#4e505a;"></div>
<div class="a" style="left:926px;top:157px;width:349px;height:1px;background:#4e505a;"></div>
<div class="t" style="left:928px;top:144.69px;font-size:11px;color:#e6e6e6;font-weight:400;letter-spacing:-0.2px;">End Frame</div>
<div class="t" style="left:1079px;top:144.69px;font-size:11px;color:#e6e6e6;font-weight:400;letter-spacing:-0.1px;">10000000</div>
<div class="a" style="left:926px;top:158px;width:349px;height:16px;background:#606272;"></div>
<div class="a" style="left:1076px;top:158px;width:1px;height:16px;background:#4e505a;"></div>
<div class="a" style="left:926px;top:174px;width:349px;height:1px;background:#4e505a;"></div>
<div class="t" style="left:928px;top:161.69px;font-size:11px;color:#e6e6e6;font-weight:400;letter-spacing:-0.2px;">Enabled</div>
<div class="a" style="left:1079px;top:160px;width:13px;height:13px;border:1px solid #f4f4f4"></div>
<svg style="left:1079px;top:160px" width="13" height="13" viewBox="0 0 13 13"><path d="M3 6.5 L5.3 9.5 L10 3" stroke="#f4f4f4" stroke-width="2" fill="none"/></svg>
<div class="a" style="left:926px;top:175px;width:349px;height:16px;background:#565865;"></div>
<div class="a" style="left:926px;top:191px;width:349px;height:1px;background:#4e505a;"></div>
<div class="a" style="left:929px;top:179px;width:9px;height:9px;border:1px solid #f0f0f0"></div>
<div class="a" style="left:931px;top:183px;width:5px;height:1px;background:#f0f0f0;"></div>
<div class="t" style="left:941px;top:178.69px;font-size:11px;color:#e6e6e6;font-weight:400;letter-spacing:-0.2px;">Variables</div>
<div class="a" style="left:926px;top:192px;width:349px;height:16px;background:#606272;"></div>
<div class="a" style="left:1076px;top:192px;width:1px;height:16px;background:#4e505a;"></div>
<div class="a" style="left:926px;top:208px;width:349px;height:1px;background:#4e505a;"></div>
<div class="t" style="left:941px;top:195.69px;font-size:11px;color:#e6e6e6;font-weight:400;letter-spacing:-0.2px;">Apply Arms Windmill</div>
<div class="a" style="left:1079px;top:194px;width:13px;height:13px;border:1px solid #f4f4f4"></div>
<svg style="left:1079px;top:194px" width="13" height="13" viewBox="0 0 13 13"><path d="M3 6.5 L5.3 9.5 L10 3" stroke="#f4f4f4" stroke-width="2" fill="none"/></svg>
<div class="a" style="left:926px;top:209px;width:349px;height:16px;background:#606272;"></div>
<div class="a" style="left:1076px;top:209px;width:1px;height:16px;background:#4e505a;"></div>
<div class="a" style="left:926px;top:225px;width:349px;height:1px;background:#4e505a;"></div>
<div class="t" style="left:941px;top:212.69px;font-size:11px;color:#e6e6e6;font-weight:400;letter-spacing:-0.2px;">Stagger Squarely</div>
<div class="a" style="left:1079px;top:211px;width:13px;height:13px;border:1px solid #f4f4f4"></div>
<svg style="left:1079px;top:211px" width="13" height="13" viewBox="0 0 13 13"><path d="M3 6.5 L5.3 9.5 L10 3" stroke="#f4f4f4" stroke-width="2" fill="none"/></svg>
<div class="a" style="left:926px;top:226px;width:349px;height:16px;background:#606272;"></div>
<div class="a" style="left:1076px;top:226px;width:1px;height:16px;background:#4e505a;"></div>
<div class="a" style="left:926px;top:242px;width:349px;height:1px;background:#4e505a;"></div>
<div class="t" style="left:941px;top:229.69px;font-size:11px;color:#e6e6e6;font-weight:400;letter-spacing:-0.2px;">Predict Ground Height</div>
<div class="a" style="left:1079px;top:228px;width:13px;height:13px;border:1px solid #f4f4f4"></div>
<svg style="left:1079px;top:228px" width="13" height="13" viewBox="0 0 13 13"><path d="M3 6.5 L5.3 9.5 L10 3" stroke="#f4f4f4" stroke-width="2" fill="none"/></svg>
<div class="a" style="left:926px;top:243px;width:349px;height:16px;background:#606272;"></div>
<div class="a" style="left:1076px;top:243px;width:1px;height:16px;background:#4e505a;"></div>
<div class="a" style="left:926px;top:259px;width:349px;height:1px;background:#4e505a;"></div>
<div class="t" style="left:941px;top:246.69px;font-size:11px;color:#e6e6e6;font-weight:400;letter-spacing:-0.2px;">Ground Height</div>
<div class="t" style="left:1079px;top:246.69px;font-size:11px;color:#e6e6e6;font-weight:400;letter-spacing:-0.1px;">0.00</div>
<div class="a" style="left:926px;top:260px;width:349px;height:16px;background:#606272;"></div>
<div class="a" style="left:1076px;top:260px;width:1px;height:16px;background:#4e505a;"></div>
<div class="a" style="left:926px;top:276px;width:349px;height:1px;background:#4e505a;"></div>
<div class="t" style="left:941px;top:263.69px;font-size:11px;color:#e6e6e6;font-weight:400;letter-spacing:-0.2px;">Maximum Steps</div>
<div class="t" style="left:1079px;top:263.69px;font-size:11px;color:#e6e6e6;font-weight:400;letter-spacing:-0.1px;">10000000</div>
<div class="a" style="left:926px;top:277px;width:349px;height:16px;background:#606272;"></div>
<div class="a" style="left:1076px;top:277px;width:1px;height:16px;background:#4e505a;"></div>
<div class="a" style="left:926px;top:293px;width:349px;height:1px;background:#4e505a;"></div>
<div class="t" style="left:941px;top:280.69px;font-size:11px;color:#e6e6e6;font-weight:400;letter-spacing:-0.2px;">Arms Speed</div>
<div class="t" style="left:1079px;top:280.69px;font-size:11px;color:#e6e6e6;font-weight:400;letter-spacing:-0.1px;">0.800</div>
<div class="a" style="left:926px;top:294px;width:349px;height:16px;background:#606272;"></div>
<div class="a" style="left:1076px;top:294px;width:1px;height:16px;background:#4e505a;"></div>
<div class="a" style="left:926px;top:310px;width:349px;height:1px;background:#4e505a;"></div>
<div class="t" style="left:941px;top:297.69px;font-size:11px;color:#e6e6e6;font-weight:400;letter-spacing:-0.2px;">Arms Strength</div>
<div class="t" style="left:1079px;top:297.69px;font-size:11px;color:#e6e6e6;font-weight:400;letter-spacing:-0.1px;">0.600</div>
<div class="a" style="left:926px;top:311px;width:349px;height:16px;background:#565865;"></div>
<div class="a" style="left:926px;top:327px;width:349px;height:1px;background:#4e505a;"></div>
<div class="t" style="left:941px;top:314.69px;font-size:11px;color:#e6e6e6;font-weight:400;letter-spacing:-0.2px;">Target Objects</div>
<div class="t" style="left:1079px;top:314.69px;font-size:11px;color:#f28a1e;font-weight:400;letter-spacing:-0.1px;">[Clear]</div>
<div class="t" style="left:1234px;top:314.69px;font-size:11px;color:#f28a1e;font-weight:400;letter-spacing:-0.1px;">[Select]</div>
<div class="a" style="left:913px;top:94px;width:9px;height:9px;border:1px solid #f4f4f4"></div>
<div class="a" style="left:915px;top:98px;width:5px;height:1px;background:#f4f4f4;"></div>
<div class="t" style="left:929px;top:93.69px;font-size:11px;color:#f0f0f0;font-weight:700;letter-spacing:0.3px;">Behaviour Event</div>
<div class="a" style="left:909px;top:695px;width:366px;height:1px;background:#7c7e8a;"></div>
<div class="t" style="left:912px;top:701.69px;font-size:11px;color:#ececec;font-weight:700;letter-spacing:0.2px;">Name</div>
<div class="t" style="left:911px;top:715.69px;font-size:11px;color:#e6e6e6;font-weight:400;">Name of behaviour to be applied to the character.</div>
<!-- cmd -->
<div class="a" style="left:0px;top:751px;width:1280px;height:1px;background:#ffffff;"></div>
<div class="a" style="left:0px;top:752px;width:1280px;height:29px;background:#f0f0f0;"></div>
<div class="a" style="left:3px;top:756px;width:1274px;height:22px;border:1px solid #a9abb1;border-right-color:#dfe3ea;border-bottom-color:#e6ebf1;border-radius:1px"></div>
<div class="a" style="left:4px;top:757px;width:1272px;height:1px;background:#ffffff;"></div>
<div class="a" style="left:4px;top:757px;width:1px;height:20px;background:#ffffff;"></div>
<div class="a" style="left:1259px;top:758px;width:16px;height:19px;background:linear-gradient(90deg,#e6e6e6,#f2f2f2 40%);"></div>
<svg style="left:1262px;top:762px" width="11" height="15" viewBox="0 0 11 15"><path d="M1 5 L5.5 0.5 L10 5 Z" fill="#222"/><path d="M1 10 L10 10 L5.5 14.5 Z" fill="#222"/><path d="M3 5 L5.5 2.5 L8 5Z M3 10 L8 10 L5.5 12.5Z" fill="#666"/></svg>
<div class="a" style="left:0px;top:781px;width:1280px;height:1px;background:#a0a0a0;"></div>
<div class="a" style="left:0px;top:782px;width:1280px;height:1px;background:#ffffff;"></div>
<!-- timeline -->
<div class="a" style="left:0px;top:783px;width:1280px;height:173px;background:#636575;"></div>
<div class="a" style="left:3px;top:786px;width:1274px;height:167px;background:#4e505a;"></div>
<div class="a" style="left:4px;top:787px;width:79px;height:12px;background:#5e6171;"></div>
<div class="a" style="left:5px;top:787px;width:10px;height:10px;border:1px solid #f0f0f0"></div>
<div class="a" style="left:7px;top:791px;width:6px;height:1px;background:#f0f0f0;"></div>
<div class="t" style="left:17px;top:787.53px;font-size:10px;color:#e4e4e4;font-weight:400;letter-spacing:-0.45px;">Character01</div>
<div class="a" style="left:4px;top:799px;width:79px;height:13px;background:#545766;"></div>
<div class="t" style="left:26px;top:800.53px;font-size:10px;color:#e4e4e4;font-weight:400;letter-spacing:-0.5px;">Track02</div>
<div class="a" style="left:4px;top:812px;width:79px;height:13px;background:#5e6171;"></div>
<div class="t" style="left:26px;top:813.53px;font-size:10px;color:#e4e4e4;font-weight:400;letter-spacing:-0.5px;">Track03</div>
<div class="a" style="left:4px;top:825px;width:79px;height:13px;background:#545766;"></div>
<div class="t" style="left:26px;top:826.53px;font-size:10px;color:#e4e4e4;font-weight:400;letter-spacing:-0.5px;">Track04</div>
<div class="a" style="left:4px;top:838px;width:79px;height:12px;background:#5e6171;"></div>
<div class="t" style="left:26px;top:839.53px;font-size:10px;color:#e4e4e4;font-weight:400;letter-spacing:-0.5px;">Track05</div>
<div class="a" style="left:4px;top:851px;width:79px;height:13px;background:#5e6171;"></div>
<div class="a" style="left:5px;top:851px;width:10px;height:10px;border:1px solid #f0f0f0"></div>
<div class="a" style="left:7px;top:855px;width:6px;height:1px;background:#f0f0f0;"></div>
<div class="t" style="left:17px;top:851.53px;font-size:10px;color:#e4e4e4;font-weight:400;letter-spacing:-0.45px;">Environment</div>
<div class="a" style="left:4px;top:864px;width:79px;height:13px;background:#545766;"></div>
<div class="t" style="left:26px;top:865.53px;font-size:10px;color:#e4e4e4;font-weight:400;letter-spacing:-0.5px;">Track02</div>
<div class="a" style="left:4px;top:877px;width:79px;height:13px;background:#5e6171;"></div>
<div class="t" style="left:26px;top:878.53px;font-size:10px;color:#e4e4e4;font-weight:400;letter-spacing:-0.5px;">Track03</div>
<div class="a" style="left:4px;top:850px;width:1272px;height:1px;background:#4e505a;"></div>
<div class="a" style="left:84px;top:787px;width:1192px;height:11px;background:#5f6272;"></div>
<div class="a" style="left:85px;top:787px;width:2px;height:11px;background:#4040d0;"></div>
<div class="a" style="left:85px;top:798px;width:1191px;height:1px;background:#000;"></div>
<div class="a" style="left:85px;top:799px;width:1191px;height:12px;background:#7073e8;"></div>
<div class="a" style="left:86px;top:799px;width:1190px;height:1px;background:#a8aaf8;"></div>
<div class="a" style="left:86px;top:799px;width:1px;height:11px;background:#a8aaf8;"></div>
<div class="a" style="left:86px;top:810px;width:1190px;height:1px;background:#3030c0;"></div>
<div class="a" style="left:85px;top:798px;width:1px;height:13px;background:#000;"></div>
<div class="t" style="left:90px;top:800.53px;font-size:10px;color:#151515;font-weight:400;">0</div>
<div class="a" style="left:85px;top:811px;width:1191px;height:1px;background:#000;"></div>
<div class="a" style="left:85px;top:812px;width:1191px;height:12px;background:#f5891e;"></div>
<div class="a" style="left:86px;top:812px;width:1190px;height:1px;background:#f8b070;"></div>
<div class="a" style="left:86px;top:812px;width:1px;height:11px;background:#f8b070;"></div>
<div class="a" style="left:86px;top:823px;width:1190px;height:1px;background:#d06a10;"></div>
<div class="a" style="left:85px;top:811px;width:1px;height:13px;background:#000;"></div>
<div class="t" style="left:90px;top:813.53px;font-size:10px;color:#151515;font-weight:400;">0</div>
<div class="a" style="left:85px;top:824px;width:1191px;height:1px;background:#000;"></div>
<div class="a" style="left:85px;top:825px;width:1191px;height:12px;background:#82848c;"></div>
<div class="a" style="left:86px;top:825px;width:1190px;height:1px;background:#b8b9be;"></div>
<div class="a" style="left:86px;top:825px;width:1px;height:11px;background:#b8b9be;"></div>
<div class="a" style="left:86px;top:836px;width:1190px;height:1px;background:#6a6c74;"></div>
<div class="a" style="left:85px;top:824px;width:1px;height:13px;background:#000;"></div>
<div class="t" style="left:90px;top:826.53px;font-size:10px;color:#151515;font-weight:400;">0</div>
<div class="a" style="left:85px;top:837px;width:1191px;height:1px;background:#000;"></div>
<div class="a" style="left:85px;top:838px;width:1191px;height:12px;background:#82848c;"></div>
<div class="a" style="left:86px;top:838px;width:1190px;height:1px;background:#b8b9be;"></div>
<div class="a" style="left:86px;top:838px;width:1px;height:11px;background:#b8b9be;"></div>
<div class="a" style="left:86px;top:849px;width:1190px;height:1px;background:#5a5c64;"></div>
<div class="a" style="left:85px;top:837px;width:1px;height:13px;background:#000;"></div>
<div class="t" style="left:90px;top:839.53px;font-size:10px;color:#151515;font-weight:400;">0</div>
<svg style="left:128px;top:812px" width="13" height="12" viewBox="0 0 13 12"><path d="M6.5 1 L12 11 L1 11 Z" fill="#c01818" stroke="#200" stroke-width="1"/></svg>
<div class="a" style="left:84px;top:851px;width:1192px;height:12px;background:#5f6272;"></div>
<div class="a" style="left:84px;top:863px;width:1192px;height:13px;background:#555867;"></div>
<div class="a" style="left:84px;top:876px;width:1192px;height:13px;background:#5f6272;"></div>
<div class="a" style="left:4px;top:851px;width:79px;height:12px;background:#5e6171;"></div>
<div class="a" style="left:4px;top:863px;width:79px;height:13px;background:#545766;"></div>
<div class="a" style="left:4px;top:876px;width:79px;height:13px;background:#5e6171;"></div>
<div class="a" style="left:5px;top:852px;width:10px;height:10px;border:1px solid #f0f0f0"></div>
<div class="a" style="left:7px;top:856px;width:6px;height:1px;background:#f0f0f0;"></div>
<div class="t" style="left:17px;top:852.53px;font-size:10px;color:#e4e4e4;font-weight:400;letter-spacing:-0.3px;">Environment</div>
<div class="t" style="left:26px;top:865.53px;font-size:10px;color:#e4e4e4;font-weight:400;letter-spacing:-0.5px;">Track02</div>
<div class="t" style="left:26px;top:878.53px;font-size:10px;color:#e4e4e4;font-weight:400;letter-spacing:-0.5px;">Track03</div>
<div class="a" style="left:83px;top:787px;width:1px;height:102px;background:#50525d;"></div>
<div class="a" style="left:4px;top:890px;width:1272px;height:62px;background:#535665;"></div>
<div class="a" style="left:85px;top:903px;width:1189px;height:22px;background:#7b7d89;"></div>
<div class="a" style="left:85px;top:903px;width:1189px;height:1px;background:#c4c4c6;"></div>
<div class="a" style="left:85px;top:903px;width:1px;height:22px;background:#c4c4c6;"></div>
<div class="a" style="left:1273px;top:903px;width:1px;height:22px;background:#c4c4c6;"></div>
<div class="a" style="left:83px;top:925px;width:1194px;height:1px;background:#f4f4f4;"></div>
<div class="a" style="left:85px;top:926px;width:1189px;height:1px;background:#3e3f48;"></div>
<div class="a" style="left:85px;top:918px;width:1px;height:7px;background:#f4f4f4;"></div>
<div class="t" style="left:83px;top:906.53px;font-size:10px;color:#e8eaf0;font-weight:400;letter-spacing:-0.5px;">0</div>
<div class="a" style="left:105px;top:922px;width:1px;height:3px;background:#f4f4f4;"></div>
<div class="a" style="left:125px;top:922px;width:1px;height:3px;background:#f4f4f4;"></div>
<div class="a" style="left:144px;top:922px;width:1px;height:3px;background:#f4f4f4;"></div>
<div class="a" style="left:164px;top:922px;width:1px;height:3px;background:#f4f4f4;"></div>
<div class="a" style="left:184px;top:918px;width:1px;height:7px;background:#f4f4f4;"></div>
<div class="t" style="left:178px;top:906.53px;font-size:10px;color:#e8eaf0;font-weight:400;letter-spacing:-0.5px;">50</div>
<div class="a" style="left:203px;top:922px;width:1px;height:3px;background:#f4f4f4;"></div>
<div class="a" style="left:223px;top:922px;width:1px;height:3px;background:#f4f4f4;"></div>
<div class="a" style="left:243px;top:922px;width:1px;height:3px;background:#f4f4f4;"></div>
<div class="a" style="left:262px;top:922px;width:1px;height:3px;background:#f4f4f4;"></div>
<div class="a" style="left:282px;top:918px;width:1px;height:7px;background:#f4f4f4;"></div>
<div class="t" style="left:274px;top:906.53px;font-size:10px;color:#e8eaf0;font-weight:400;letter-spacing:-0.5px;">100</div>
<div class="a" style="left:302px;top:922px;width:1px;height:3px;background:#f4f4f4;"></div>
<div class="a" style="left:321px;top:922px;width:1px;height:3px;background:#f4f4f4;"></div>
<div class="a" style="left:341px;top:922px;width:1px;height:3px;background:#f4f4f4;"></div>
<div class="a" style="left:361px;top:922px;width:1px;height:3px;background:#f4f4f4;"></div>
<div class="a" style="left:380px;top:918px;width:1px;height:7px;background:#f4f4f4;"></div>
<div class="t" style="left:373px;top:906.53px;font-size:10px;color:#e8eaf0;font-weight:400;letter-spacing:-0.5px;">150</div>
<div class="a" style="left:400px;top:922px;width:1px;height:3px;background:#f4f4f4;"></div>
<div class="a" style="left:420px;top:922px;width:1px;height:3px;background:#f4f4f4;"></div>
<div class="a" style="left:439px;top:922px;width:1px;height:3px;background:#f4f4f4;"></div>
<div class="a" style="left:459px;top:922px;width:1px;height:3px;background:#f4f4f4;"></div>
<div class="a" style="left:479px;top:918px;width:1px;height:7px;background:#f4f4f4;"></div>
<div class="t" style="left:471px;top:906.53px;font-size:10px;color:#e8eaf0;font-weight:400;letter-spacing:-0.5px;">200</div>
<div class="a" style="left:498px;top:922px;width:1px;height:3px;background:#f4f4f4;"></div>
<div class="a" style="left:518px;top:922px;width:1px;height:3px;background:#f4f4f4;"></div>
<div class="a" style="left:538px;top:922px;width:1px;height:3px;background:#f4f4f4;"></div>
<div class="a" style="left:557px;top:922px;width:1px;height:3px;background:#f4f4f4;"></div>
<div class="a" style="left:577px;top:918px;width:1px;height:7px;background:#f4f4f4;"></div>
<div class="t" style="left:569px;top:906.53px;font-size:10px;color:#e8eaf0;font-weight:400;letter-spacing:-0.5px;">250</div>
<div class="a" style="left:597px;top:922px;width:1px;height:3px;background:#f4f4f4;"></div>
<div class="a" style="left:616px;top:922px;width:1px;height:3px;background:#f4f4f4;"></div>
<div class="a" style="left:636px;top:922px;width:1px;height:3px;background:#f4f4f4;"></div>
<div class="a" style="left:656px;top:922px;width:1px;height:3px;background:#f4f4f4;"></div>
<div class="a" style="left:675px;top:918px;width:1px;height:7px;background:#f4f4f4;"></div>
<div class="t" style="left:668px;top:906.53px;font-size:10px;color:#e8eaf0;font-weight:400;letter-spacing:-0.5px;">300</div>
<div class="a" style="left:695px;top:922px;width:1px;height:3px;background:#f4f4f4;"></div>
<div class="a" style="left:715px;top:922px;width:1px;height:3px;background:#f4f4f4;"></div>
<div class="a" style="left:734px;top:922px;width:1px;height:3px;background:#f4f4f4;"></div>
<div class="a" style="left:754px;top:922px;width:1px;height:3px;background:#f4f4f4;"></div>
<div class="a" style="left:774px;top:918px;width:1px;height:7px;background:#f4f4f4;"></div>
<div class="t" style="left:766px;top:906.53px;font-size:10px;color:#e8eaf0;font-weight:400;letter-spacing:-0.5px;">350</div>
<div class="a" style="left:793px;top:922px;width:1px;height:3px;background:#f4f4f4;"></div>
<div class="a" style="left:813px;top:922px;width:1px;height:3px;background:#f4f4f4;"></div>
<div class="a" style="left:833px;top:922px;width:1px;height:3px;background:#f4f4f4;"></div>
<div class="a" style="left:852px;top:922px;width:1px;height:3px;background:#f4f4f4;"></div>
<div class="a" style="left:872px;top:918px;width:1px;height:7px;background:#f4f4f4;"></div>
<div class="t" style="left:864px;top:906.53px;font-size:10px;color:#e8eaf0;font-weight:400;letter-spacing:-0.5px;">400</div>
<div class="a" style="left:892px;top:922px;width:1px;height:3px;background:#f4f4f4;"></div>
<div class="a" style="left:911px;top:922px;width:1px;height:3px;background:#f4f4f4;"></div>
<div class="a" style="left:931px;top:922px;width:1px;height:3px;background:#f4f4f4;"></div>
<div class="a" style="left:951px;top:922px;width:1px;height:3px;background:#f4f4f4;"></div>
<div class="a" style="left:970px;top:918px;width:1px;height:7px;background:#f4f4f4;"></div>
<div class="t" style="left:963px;top:906.53px;font-size:10px;color:#e8eaf0;font-weight:400;letter-spacing:-0.5px;">450</div>
<div class="a" style="left:990px;top:922px;width:1px;height:3px;background:#f4f4f4;"></div>
<div class="a" style="left:1010px;top:922px;width:1px;height:3px;background:#f4f4f4;"></div>
<div class="a" style="left:1029px;top:922px;width:1px;height:3px;background:#f4f4f4;"></div>
<div class="a" style="left:1049px;top:922px;width:1px;height:3px;background:#f4f4f4;"></div>
<div class="a" style="left:1069px;top:918px;width:1px;height:7px;background:#f4f4f4;"></div>
<div class="t" style="left:1061px;top:906.53px;font-size:10px;color:#e8eaf0;font-weight:400;letter-spacing:-0.5px;">500</div>
<div class="a" style="left:1088px;top:922px;width:1px;height:3px;background:#f4f4f4;"></div>
<div class="a" style="left:1108px;top:922px;width:1px;height:3px;background:#f4f4f4;"></div>
<div class="a" style="left:1128px;top:922px;width:1px;height:3px;background:#f4f4f4;"></div>
<div class="a" style="left:1147px;top:922px;width:1px;height:3px;background:#f4f4f4;"></div>
<div class="a" style="left:1167px;top:918px;width:1px;height:7px;background:#f4f4f4;"></div>
<div class="t" style="left:1159px;top:906.53px;font-size:10px;color:#e8eaf0;font-weight:400;letter-spacing:-0.5px;">550</div>
<div class="a" style="left:1187px;top:922px;width:1px;height:3px;background:#f4f4f4;"></div>
<div class="a" style="left:1206px;top:922px;width:1px;height:3px;background:#f4f4f4;"></div>
<div class="a" style="left:1226px;top:922px;width:1px;height:3px;background:#f4f4f4;"></div>
<div class="a" style="left:1246px;top:922px;width:1px;height:3px;background:#f4f4f4;"></div>
<div class="a" style="left:1266px;top:918px;width:1px;height:7px;background:#f4f4f4;"></div>
<div class="t" style="left:1258px;top:906.53px;font-size:10px;color:#e8eaf0;font-weight:400;letter-spacing:-0.5px;">600</div>
<div class="a" style="left:255px;top:903px;width:19px;height:23px;border:2px solid #fff;border-bottom:none"></div>
<div class="a" style="left:261px;top:904px;width:7px;height:1.5px;background:#000;"></div>
<div class="a" style="left:264px;top:905px;width:1.5px;height:2px;background:#fff;"></div>
<svg style="left:258px;top:917px" width="13" height="9" viewBox="0 0 13 9"><path d="M3.5 8.5 L8 2.5 M4.5 2.5 L9.5 8.5" stroke="#fff" stroke-width="1" fill="none"/></svg>
<svg style="left:264px;top:890px" width="8" height="12" viewBox="0 0 8 12"><path d="M1 1 L7 6 L1 11 Z" fill="#7a2424"/><path d="M1 1 L1 12" stroke="#3a3a40" stroke-width="1"/></svg>
<div class="a" style="left:85px;top:927px;width:1189px;height:12px;background:#686868;"></div>
<div class="a" style="left:85px;top:939px;width:1189px;height:1px;background:#3e3e42;"></div>
<div class="a" style="left:85px;top:940px;width:1189px;height:12px;background:#5a5a5a;"></div>
<div class="a" style="left:85px;top:927px;width:1px;height:25px;background:#4a4a4e;"></div>
<div class="a" style="left:1273px;top:927px;width:1px;height:25px;background:#4a4a4e;"></div>
<div class="t" style="left:90px;top:929.53px;font-size:10px;color:#151515;font-weight:400;">0</div>
<div class="t" style="left:90px;top:942.53px;font-size:10px;color:#151515;font-weight:400;">0</div>
<div class="t" style="left:653px;top:929.53px;font-size:10px;color:#151515;font-weight:400;letter-spacing:-0.4px;">Save Range</div>
<div class="t" style="left:655px;top:942.53px;font-size:10px;color:#151515;font-weight:400;letter-spacing:-0.4px;">Loop Range</div>
<div class="t" style="left:1253px;top:929.53px;font-size:10px;color:#151515;font-weight:400;letter-spacing:-0.3px;">604</div>
<div class="t" style="left:1253px;top:942.53px;font-size:10px;color:#151515;font-weight:400;letter-spacing:-0.3px;">604</div>
<!-- status -->
<div class="a" style="left:0px;top:953px;width:1280px;height:4px;background:#636575;"></div>
<div class="a" style="left:0px;top:957px;width:1280px;height:1px;background:#ffffff;"></div>
<div class="a" style="left:0px;top:958px;width:1280px;height:26px;background:#636575;"></div>
<div class="t" style="left:12px;top:966.69px;font-size:11px;color:#dcdde2;font-weight:400;letter-spacing:-0.35px;">View Frame:</div>
<div class="a" style="left:75px;top:961px;width:54px;height:20px;background:#f4f4f4;"></div>
<div class="a" style="left:77px;top:963px;width:34px;height:16px;background:#626474;"></div>
<div class="a" style="left:112px;top:963px;width:15px;height:7px;background:linear-gradient(#f6f6f6,#e4e4e4);"></div>
<div class="a" style="left:112px;top:970px;width:15px;height:2px;background:#a8a8ac;"></div>
<div class="a" style="left:112px;top:972px;width:15px;height:7px;background:linear-gradient(#f6f6f6,#e4e4e4);"></div>
<div class="a" style="left:127px;top:963px;width:1px;height:16px;background:#a8a8ac;"></div>
<svg style="left:115.0px;top:964px" width="9" height="14" viewBox="0 0 9 14"><path d="M1.5 4.5 L4.5 1.5 L7.5 4.5 Z" fill="#5066cc"/><path d="M1.5 9 L7.5 9 L4.5 12 Z" fill="#5066cc"/></svg>
<div class="t" style="left:81px;top:966.27px;font-size:11.5px;color:#dcdde2;font-weight:400;">604</div>
<div class="t" style="left:139px;top:966.69px;font-size:11px;color:#dcdde2;font-weight:400;letter-spacing:-0.1px;">Replay Speed:</div>
<div class="a" style="left:212px;top:961px;width:62px;height:20px;background:#f4f4f4;"></div>
<div class="a" style="left:214px;top:963px;width:43px;height:16px;background:#626474;"></div>
<div class="a" style="left:258px;top:963px;width:14px;height:7px;background:linear-gradient(#f6f6f6,#e4e4e4);"></div>
<div class="a" style="left:258px;top:970px;width:14px;height:2px;background:#a8a8ac;"></div>
<div class="a" style="left:258px;top:972px;width:14px;height:7px;background:linear-gradient(#f6f6f6,#e4e4e4);"></div>
<div class="a" style="left:272px;top:963px;width:1px;height:16px;background:#a8a8ac;"></div>
<svg style="left:260.5px;top:964px" width="9" height="14" viewBox="0 0 9 14"><path d="M1.5 4.5 L4.5 1.5 L7.5 4.5 Z" fill="#5066cc"/><path d="M1.5 9 L7.5 9 L4.5 12 Z" fill="#5066cc"/></svg>
<div class="t" style="left:218px;top:966.27px;font-size:11.5px;color:#dcdde2;font-weight:400;">1.00</div>
<div class="t" style="left:284px;top:966.69px;font-size:11px;color:#dcdde2;font-weight:400;letter-spacing:-0.25px;">Strobe Range:</div>
<div class="a" style="left:357px;top:961px;width:56px;height:20px;background:#f4f4f4;"></div>
<div class="a" style="left:359px;top:963px;width:37px;height:16px;background:#626474;"></div>
<div class="a" style="left:397px;top:963px;width:14px;height:7px;background:linear-gradient(#f6f6f6,#e4e4e4);"></div>
<div class="a" style="left:397px;top:970px;width:14px;height:2px;background:#a8a8ac;"></div>
<div class="a" style="left:397px;top:972px;width:14px;height:7px;background:linear-gradient(#f6f6f6,#e4e4e4);"></div>
<div class="a" style="left:411px;top:963px;width:1px;height:16px;background:#a8a8ac;"></div>
<svg style="left:399.5px;top:964px" width="9" height="14" viewBox="0 0 9 14"><path d="M1.5 4.5 L4.5 1.5 L7.5 4.5 Z" fill="#5066cc"/><path d="M1.5 9 L7.5 9 L4.5 12 Z" fill="#5066cc"/></svg>
<div class="t" style="left:363px;top:966.27px;font-size:11.5px;color:#dcdde2;font-weight:400;">0</div>
<div class="t" style="left:424px;top:966.69px;font-size:11px;color:#dcdde2;font-weight:400;letter-spacing:0.1px;">Strobe Interval:</div>
<div class="a" style="left:504px;top:961px;width:56px;height:20px;background:#f4f4f4;"></div>
<div class="a" style="left:506px;top:963px;width:37px;height:16px;background:#626474;"></div>
<div class="a" style="left:544px;top:963px;width:14px;height:7px;background:linear-gradient(#f6f6f6,#e4e4e4);"></div>
<div class="a" style="left:544px;top:970px;width:14px;height:2px;background:#a8a8ac;"></div>
<div class="a" style="left:544px;top:972px;width:14px;height:7px;background:linear-gradient(#f6f6f6,#e4e4e4);"></div>
<div class="a" style="left:558px;top:963px;width:1px;height:16px;background:#a8a8ac;"></div>
<svg style="left:546.5px;top:964px" width="9" height="14" viewBox="0 0 9 14"><path d="M1.5 4.5 L4.5 1.5 L7.5 4.5 Z" fill="#5066cc"/><path d="M1.5 9 L7.5 9 L4.5 12 Z" fill="#5066cc"/></svg>
<div class="t" style="left:510px;top:966.27px;font-size:11.5px;color:#dcdde2;font-weight:400;">12</div>
<div class="t" style="left:584px;top:966.69px;font-size:11px;color:#dcdde2;font-weight:400;letter-spacing:-0.1px;">Frame: 376</div>
<svg style="left:1040px;top:958px" width="240" height="26" viewBox="1040 958 240 26">
<defs><linearGradient id="tg" x1="0" y1="0" x2="0" y2="1"><stop offset="0" stop-color="#a8d0f4"/><stop offset="1" stop-color="#6592d8"/></linearGradient></defs>
<g fill="url(#tg)" stroke="#1e2a66" stroke-width="0.9" stroke-linejoin="round">
<path d="M1046.5 966 L1048.5 964.5 L1055.5 968.8 L1062.5 964.5 L1064 966.5 L1058 970.2 L1064.5 974.5 L1062.8 976.8 L1055.5 972 L1048 976.8 L1046 974.8 L1053 970.3 Z"/>
<rect x="1074.5" y="964.5" width="3" height="11.5"/>
<path d="M1085.5 964.5 L1085.5 976 L1077.8 970.2 Z"/><path d="M1093 964.5 L1093 976 L1085.3 970.2 Z"/>
<path d="M1115 964.5 L1115 976 L1104.5 970.2 Z"/><rect x="1117.5" y="964.5" width="3" height="11.5"/>
<path d="M1147 964.5 L1147 976 L1136 970.2 Z"/>
<path d="M1196.5 964.5 L1196.5 976 L1207.5 970.2 Z"/>
<rect x="1221" y="964.5" width="3.2" height="11.5"/><path d="M1226 964.5 L1226 976 L1237.5 970.2 Z"/>
<path d="M1249 964.5 L1249 976 L1257 970.2 Z"/><path d="M1256.8 964.5 L1256.8 976 L1264.8 970.2 Z"/><rect x="1265" y="964.5" width="3.2" height="11.5"/>
</g>
<g fill="none" stroke="#1e2a66" stroke-width="2.6" stroke-linecap="round"><path d="M1162 966.5 Q1164 964 1170 967 L1178 971.5 Q1182 975 1178.5 976.5 Q1176 977 1172 974 M1162 966.5 Q1163 972 1170 977.5 Q1173 978.5 1175 973 L1179 966 Q1180 963.5 1177 963.5"/></g>
<g fill="none" stroke="#8ab8ec" stroke-width="1.4" stroke-linecap="round"><path d="M1162 966.5 Q1164 964 1170 967 L1178 971.5 Q1182 975 1178.5 976.5 Q1176 977 1172 974 M1162 966.5 Q1163 972 1170 977.5 Q1173 978.5 1175 973 L1179 966 Q1180 963.5 1177 963.5"/></g>
</svg>
<!-- taskbar -->
<div class="a" style="left:0px;top:984px;width:1280px;height:1px;background:#1a2230;"></div>
<div class="a" style="left:0px;top:985px;width:1280px;height:1px;background:#7f92b8;"></div>
<div class="a" style="left:0px;top:986px;width:1280px;height:38px;background:linear-gradient(90deg,#3a5796 0px,#4361a3 60px,#3d5b9c 130px,#4866a8 200px,#4061a2 300px,#4867aa 380px,#3e5ea0 470px,#4766a8 560px,#4464a6 650px,#4a6aac 760px,#4d6db0 880px,#5272b4 980px,#4a68aa 1040px);"></div>
<svg style="left:0;top:986px" width="1280" height="38" viewBox="0 986 1280 38"><defs>
<linearGradient id="tbd" gradientUnits="userSpaceOnUse" x1="1060" y1="995" x2="1110" y2="1085"><stop offset="0" stop-color="#14244e" stop-opacity="0"/><stop offset="0.55" stop-color="#14244e" stop-opacity="0.72"/><stop offset="1" stop-color="#14244e" stop-opacity="0.8"/></linearGradient>
<linearGradient id="tbl" gradientUnits="userSpaceOnUse" x1="1000" y1="970" x2="1070" y2="1100"><stop offset="0" stop-color="#a8c0f0" stop-opacity="0"/><stop offset="0.45" stop-color="#a8c0f0" stop-opacity="0.22"/><stop offset="0.6" stop-color="#a8c0f0" stop-opacity="0"/></linearGradient></defs>
<rect x="900" y="986" width="380" height="38" fill="url(#tbl)"/>
<polygon points="1060,986 1280,986 1280,1024 990,1024" fill="#14244e" opacity="0.0"/>
<rect x="900" y="986" width="380" height="38" fill="url(#tbd)"/>
</svg><div class="a" style="left:0px;top:986px;width:1280px;height:38px;background:linear-gradient(180deg,rgba(255,255,255,0.05),rgba(0,0,0,0.06));"></div>
<div class="a" style="left:30px;top:985px;width:60px;height:30px;background:radial-gradient(closest-side,rgba(30,50,110,0.25),rgba(30,50,110,0));"></div>
<div class="a" style="left:210px;top:998px;width:80px;height:25px;background:radial-gradient(closest-side,rgba(140,170,230,0.18),rgba(140,170,230,0));"></div>
<div class="a" style="left:300px;top:985px;width:60px;height:20px;background:radial-gradient(closest-side,rgba(30,50,110,0.2),rgba(30,50,110,0));"></div>
<div class="a" style="left:435px;top:1000px;width:70px;height:24px;background:radial-gradient(closest-side,rgba(150,180,235,0.16),rgba(150,180,235,0));"></div>
<div class="a" style="left:605px;top:987px;width:70px;height:22px;background:radial-gradient(closest-side,rgba(30,50,110,0.2),rgba(30,50,110,0));"></div>
<div class="a" style="left:715px;top:1004px;width:90px;height:22px;background:radial-gradient(closest-side,rgba(150,180,235,0.15),rgba(150,180,235,0));"></div>
<div class="a" style="left:875px;top:987px;width:60px;height:18px;background:radial-gradient(closest-side,rgba(30,55,120,0.25),rgba(30,55,120,0));"></div>
<div class="a" style="left:910px;top:1002px;width:50px;height:16px;background:radial-gradient(closest-side,rgba(30,55,120,0.2),rgba(30,55,120,0));"></div>
<div class="a" style="left:1005px;top:998px;width:60px;height:20px;background:radial-gradient(closest-side,rgba(30,55,120,0.2),rgba(30,55,120,0));"></div>
<div class="a" style="left:840px;top:1011px;width:80px;height:14px;background:radial-gradient(closest-side,rgba(160,190,240,0.15),rgba(160,190,240,0));"></div>
<svg style="left:7px;top:985px" width="42" height="39" viewBox="0 0 42 39">
<defs><radialGradient id="orb" cx="0.5" cy="0.95" r="0.75"><stop offset="0" stop-color="#40e0ff"/><stop offset="0.35" stop-color="#1a90d0"/><stop offset="0.7" stop-color="#0c4a8a"/><stop offset="1" stop-color="#0a3470"/></radialGradient>
<linearGradient id="orbg" x1="0" y1="0" x2="0" y2="1"><stop offset="0" stop-color="#e8f0f8" stop-opacity="0.95"/><stop offset="1" stop-color="#9ab8d8" stop-opacity="0.4"/></linearGradient></defs>
<circle cx="20.5" cy="18.5" r="18" fill="url(#orb)" stroke="#a8b8d4" stroke-width="1"/>
<path d="M4.5 17 Q5 3 20.5 2.5 Q36 3 36.5 17 Q28 14 20.5 14.5 Q13 14 4.5 17 Z" fill="url(#orbg)" opacity="0.75"/>
<path d="M12.5 9.5 Q15.5 7.5 19.8 9 L18.6 17 Q15 15.8 11 17.2 Z" fill="#f25a20"/>
<path d="M20.8 9.3 Q24.5 11 29.8 8.8 L28.5 17.2 Q24 19 19.6 17.2 Z" fill="#8cc43a"/>
<path d="M10.8 18.2 Q14.5 16.8 18.4 18 L17.2 26 Q13.2 24.6 9.5 26 Z" fill="#3aa6ee"/>
<path d="M19.4 18.1 Q23.5 19.9 28.3 18.3 L27 26.3 Q22.6 28 18.2 26.1 Z" fill="#fcc420"/>
</svg><svg style="left:72px;top:994px" width="34" height="24" viewBox="0 0 34 24">
<defs><linearGradient id="drv" x1="0" y1="0" x2="0" y2="1"><stop offset="0" stop-color="#f4f4f4"/><stop offset="1" stop-color="#9a9a9a"/></linearGradient></defs>
<path d="M2 13 L10 8 L30 8 L32 12 L32 18 L25 23 L2 19 Z" fill="url(#drv)" stroke="#6a6a6a" stroke-width="0.7"/>
<path d="M2 13 L25 17 L32 12" stroke="#fff" stroke-width="0.8" fill="none"/>
<rect x="25" y="17" width="2" height="4" fill="#3ab03a"/>
<path d="M4 1 L8 2 L20 3 L27 3 L27 10 L12 10 Z" fill="#d4a838" stroke="#8a6a18" stroke-width="0.6"/>
</svg><svg style="left:135px;top:990px" width="32" height="34" viewBox="0 0 32 34">
<path d="M2 6 L6 5 L6 26 L26 29 L26 32 L5 30 L2 28 Z" fill="#d82020" stroke="#901010" stroke-width="0.6"/>
<rect x="9" y="5" width="7" height="6" fill="#f0c040"/><rect x="8" y="12" width="9" height="5" fill="#40b040"/><rect x="8" y="18" width="8" height="6" fill="#3070e0"/>
<rect x="17" y="19" width="5" height="6" fill="#40a0f0"/><path d="M18 9 L24 13 L18 15 Z" fill="#40c040"/>
<rect x="22" y="16" width="4" height="12" fill="#c050e0"/><path d="M21 2 L26 5 L25 7 L20 4Z" fill="#c060f0"/><rect x="28" y="17" width="2" height="2" fill="#40c0f0"/>
</svg><svg style="left:199px;top:988px" width="32" height="34" viewBox="0 0 32 34">
<path d="M3 14 Q4 6 14 6 Q24 6 24 13 Q23 18 18 18 Q15 18 16 22 Q16 27 9 26 Q2 24 3 14Z" fill="#cfe4f4" stroke="#8aa8c8" stroke-width="0.6"/>
<circle cx="7" cy="12" r="2" fill="#e03030"/><circle cx="12" cy="9" r="2" fill="#50b050"/><circle cx="17" cy="9" r="2" fill="#f0c020"/><circle cx="9" cy="19" r="2.2" fill="#90a8c8"/>
<path d="M28 3 L12 31" stroke="#e09030" stroke-width="2.5"/><path d="M25 2 L29 1 L30 6 L27 7Z" fill="#c8a878"/>
</svg><svg style="left:258px;top:988px" width="34" height="34" viewBox="0 0 34 34">
<path d="M4 8 Q4 3 10 3 L24 3 Q30 3 30 8 L26 24 Q22 31 17 31 Q12 31 8 24 Z" fill="#3a2010" stroke="#f07820" stroke-width="2.2"/>
<text x="17" y="23" font-family="Liberation Sans" font-weight="700" font-size="17" fill="#f08020" text-anchor="middle">G</text>
</svg><svg style="left:319px;top:990px" width="36" height="32" viewBox="0 0 36 32">
<path d="M2 4 L13 4 L15 6 L32 6 L32 28 L2 28Z" fill="#e8d890" stroke="#b09a50" stroke-width="0.7"/>
<rect x="5" y="2" width="8" height="5" fill="#fff"/><rect x="6" y="3" width="2" height="2" fill="#30b030"/><rect x="14" y="4" width="8" height="5" fill="#fff"/><rect x="15" y="5" width="2" height="2" fill="#d03030"/><rect x="22" y="5" width="8" height="5" fill="#fff"/><rect x="23" y="6" width="2" height="2" fill="#3080d0"/>
<path d="M2 10 L32 10 L32 28 L2 28Z" fill="#f4e8b0" stroke="#c0a860" stroke-width="0.7"/>
<path d="M7 30 L7 19 L27 19 L27 30 L22 30 L22 24 L12 24 L12 30 Z" fill="#9cd4f4" stroke="#4a90c8" stroke-width="0.8"/>
</svg><svg style="left:383px;top:991px" width="30" height="30" viewBox="0 0 30 30">
<path d="M3 2 L24 2 L26 4 L26 26 L3 26Z" fill="#a8d4f0" stroke="#70a8d8" stroke-width="0.8"/><path d="M25 3 L27 5 L27 27 L4 27" fill="none" stroke="#88bce4" stroke-width="1"/>
<circle cx="13" cy="14" r="8" fill="#f07820" stroke="#e05010" stroke-width="1"/><path d="M10.5 9.5 L18 14 L10.5 18.5Z" fill="#fff"/>
</svg><svg style="left:443px;top:987px" width="32" height="33" viewBox="0 0 32 33">
<defs><linearGradient id="wd" x1="0" y1="0" x2="0" y2="1"><stop offset="0" stop-color="#ffffff"/><stop offset="1" stop-color="#d8e4f0"/></linearGradient></defs>
<path d="M3 3 L24 3 L24 30 L3 30Z" fill="url(#wd)" stroke="#8aa4c4" stroke-width="0.8"/>
<path d="M5 6 L9 6 L11.5 16 L14 6 L17 6 L19.5 16 L22 6 L25 6 L21 21 L18 21 L15.5 11 L13 21 L10 21 Z" fill="#1c54b4" stroke="#0c3a8a" stroke-width="0.5"/>
<path d="M14 20 L28 23 L26 30 L12 27 Z" fill="#f4f8fc" stroke="#8aa4c4" stroke-width="0.7"/>
<path d="M15 23 L26 25.5 M14.5 25.5 L25 28" stroke="#a8bcd4" stroke-width="0.8"/>
</svg><svg style="left:505px;top:988px" width="34" height="34" viewBox="0 0 34 34">
<defs><radialGradient id="ff" cx="0.6" cy="0.25" r="0.8"><stop offset="0" stop-color="#ffe040"/><stop offset="0.4" stop-color="#ff9020"/><stop offset="0.8" stop-color="#f03050"/><stop offset="1" stop-color="#d02070"/></radialGradient></defs>
<circle cx="16" cy="18" r="14" fill="url(#ff)"/><path d="M22 2 Q32 10 30 18" stroke="#ffb020" stroke-width="3" fill="none"/>
<circle cx="16" cy="18" r="6.5" fill="#6a2cb8"/><path d="M9 13 Q14 9 20 12 Q15 12 13 16Z" fill="#ff8a20"/>
</svg><div class="a" style="left:555px;top:985px;width:60px;height:38px;border:1px solid rgba(20,30,60,0.55);border-radius:3px;background:linear-gradient(135deg,rgba(255,255,255,0.42),rgba(255,255,255,0.18) 45%,rgba(255,255,255,0.22) 100%);box-shadow:inset 0 0 0 1px rgba(255,255,255,0.35)"></div><svg style="left:569px;top:988px" width="32" height="32" viewBox="0 0 32 32">
<circle cx="16" cy="16" r="15.5" fill="#db4437"/>
<path d="M16 16 L29.4 8.2 A15.5 15.5 0 0 1 16 31.5 Z" fill="#f4c20d"/>
<path d="M16 16 L16 31.5 A15.5 15.5 0 0 1 2.6 8.2 Z" fill="#0f9d58"/>
<path d="M16 16 L2.6 8.2 A15.5 15.5 0 0 1 15 0.5 L16 0.5Z" fill="#db4437"/>
<circle cx="16" cy="16" r="7.2" fill="#fff"/><circle cx="16" cy="16" r="5.6" fill="#3b7fe0"/>
</svg><svg style="left:629px;top:990px" width="36" height="32" viewBox="0 0 36 32">
<circle cx="6" cy="8" r="5" fill="#40b040"/><circle cx="30" cy="8" r="5" fill="#40b040"/>
<ellipse cx="18" cy="16" rx="14" ry="13" fill="#40b040"/>
<ellipse cx="18" cy="20" rx="5" ry="8" fill="#f4f4f4"/><ellipse cx="18" cy="16" rx="2" ry="1.5" fill="#222"/><circle cx="12" cy="12" r="1" fill="#222"/><circle cx="24" cy="12" r="1" fill="#222"/>
</svg><div class="a" style="left:679px;top:985px;width:59px;height:38px;border:1px solid rgba(20,30,60,0.6);border-radius:3px;background:linear-gradient(135deg,rgba(255,255,255,0.32),rgba(255,255,255,0.12) 50%,rgba(255,255,255,0.16))"></div><svg style="left:692px;top:991px" width="34" height="26" viewBox="0 0 34 26">
<text x="17" y="21" font-family="Liberation Serif" font-weight="700" font-size="22" fill="#111" stroke="#111" stroke-width="5" stroke-linejoin="round" text-anchor="middle" letter-spacing="-0.5">IV</text>
<text x="17" y="21" font-family="Liberation Serif" font-weight="700" font-size="22" fill="#111" stroke="#f4f4f4" stroke-width="2.6" stroke-linejoin="round" paint-order="stroke" text-anchor="middle" letter-spacing="-0.5">IV</text>
</svg><div class="a" style="left:742px;top:985px;width:58px;height:38px;border:1px solid rgba(20,30,60,0.6);border-radius:3px;background:linear-gradient(135deg,rgba(255,255,255,0.6),rgba(255,255,255,0.3) 50%,rgba(255,255,255,0.4));box-shadow:inset 0 0 0 1px rgba(255,255,255,0.4)"></div><svg style="left:755px;top:988px" width="32" height="32" viewBox="0 0 32 32">
<rect width="32" height="32" fill="#000"/>
<g fill="none" stroke="#4050d0" stroke-width="2.4" stroke-linecap="round"><path d="M22.5 16.3 Q12 8 2.4 7.4 Q7 12 7 17 Q5 27 10.5 26.7 Q16 25.5 22.5 16.3 M22.5 16.3 Q25 12 26 7 Q26 3 20.5 2.5 M22.5 16.3 Q26 21 28.8 24.5 Q27 26 19.5 20"/></g>
<g fill="none" stroke="#b8c8ff" stroke-width="1.1" stroke-linecap="round"><path d="M22.5 16.3 Q12 8 2.4 7.4 Q7 12 7 17 Q5 27 10.5 26.7 Q16 25.5 22.5 16.3 M22.5 16.3 Q25 12 26 7 Q26 3 20.5 2.5 M22.5 16.3 Q26 21 28.8 24.5 Q27 26 19.5 20"/></g>
<circle cx="22.3" cy="16.3" r="3.2" fill="#f4f8ff"/>
</svg><div class="t" style="left:1115px;top:995.84px;font-size:12px;color:#e8ecf4;font-weight:400;">RU</div>
<svg style="left:1145px;top:1001px" width="9" height="6" viewBox="0 0 9 6"><path d="M0.5 5.5 L4.5 1 L8.5 5.5Z" fill="#f0f0f0"/></svg><svg style="left:1167px;top:997px" width="16" height="16" viewBox="0 0 16 16"><path d="M1 5 L4 5 L8 1 L8 15 L4 11 L1 11Z" fill="#f4f4f4" stroke="#666" stroke-width="0.5"/><path d="M11 5 Q13 8 11 11" stroke="#e8e8e8" stroke-width="1.2" fill="none"/></svg><div class="t" style="left:1214px;top:990.84px;font-size:12px;color:#f4f6fa;font-weight:400;">23:25</div>
<div class="t" style="left:1200px;top:1007.84px;font-size:12px;color:#f4f6fa;font-weight:400;letter-spacing:-0.3px;">26.11.2023</div>
<div class="a" style="left:1266px;top:985px;width:14px;height:39px;border:1px solid rgba(0,0,0,0.5);border-right:none;background:linear-gradient(90deg,rgba(255,255,255,0.35),rgba(255,255,255,0.12))"></div></body></html>
